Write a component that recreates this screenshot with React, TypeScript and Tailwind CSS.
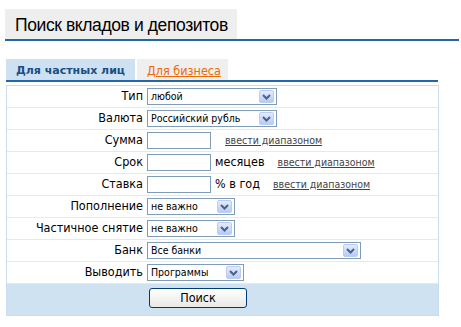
import React from "react";

const COND = '"DejaVu Sans Condensed", "DejaVu Sans", Tahoma, sans-serif';

const Chevron = () => (
  <div className="absolute right-[2px] top-[1px] w-[15px] h-[13px] rounded-[2px] border border-[#bccbf0] bg-gradient-to-b from-[#e2ebfe] to-[#b7cbf5] flex items-center justify-center">
    <svg width="9" height="6" viewBox="0 0 9 6">
      <path d="M1 1 L4.5 4.5 L8 1" fill="none" stroke="#4d6185" strokeWidth="2" />
    </svg>
  </div>
);

const Select = ({ w, text }: { w: string; text: string }) => (
  <div className={`relative h-[17px] border border-[#7f9db9] bg-white ${w}`}>
    <span className="absolute left-[3px] top-0 leading-[15px] text-[10.5px] text-black whitespace-nowrap" style={{ fontFamily: COND }}>
      {text}
    </span>
    <Chevron />
  </div>
);

const Input = () => <div className="h-[17px] w-[64px] border border-[#7f9db9] bg-white" />;

const Link = ({ className = "" }: { className?: string }) => (
  <span className={`text-[10.5px] text-[#444444] underline whitespace-nowrap ${className}`} style={{ fontFamily: COND }}>
    ввести диапазоном
  </span>
);

const Row = ({ label, children }: { label: string; children: React.ReactNode }) => (
  <div className="flex items-center h-[22px] border-b border-[#e9e9e9]">
    <div className="w-[140px] pr-[4px] text-right text-[12.5px] text-black whitespace-nowrap" style={{ fontFamily: COND }}>
      {label}
    </div>
    <div className="flex items-center">{children}</div>
  </div>
);

export default function App() {
  return (
    <div
      className="w-[461px] h-[327px] bg-white overflow-hidden"
      style={{ fontFamily: '"DejaVu Sans", Tahoma, sans-serif' }}
    >
      <div className="pt-[9px] pl-[5px]">
        <div
          className="w-[232px] h-[30px] bg-[#eeeeee] pl-[10px] text-[17.5px] leading-[32px] text-black whitespace-nowrap"
          style={{ fontFamily: '"Liberation Sans", Arial, sans-serif', letterSpacing: "-0.4px" }}
        >
          Поиск вкладов и депозитов
        </div>
        <div className="w-[454px] h-[2px] bg-[#2467a8]" />
      </div>

      <div className="ml-[6px] mt-[18px] flex gap-[2px] h-[21px]">
        <div className="w-[129px] bg-[#cde1f2] pl-[10px] text-[11px] font-bold leading-[23px] text-[#1b4e82] whitespace-nowrap">
          Для частных лиц
        </div>
        <div className="w-[91px] bg-[#efefef] pl-[10px] text-[12.5px] leading-[23px] text-[#ee6a00] underline whitespace-nowrap" style={{ fontFamily: COND }}>
          Для бизнеса
        </div>
      </div>
      <div className="ml-[6px] w-[432px] h-[2px] bg-[#2467a8]" />

      <div className="ml-[6px] mt-[3px] w-[433px] border border-[#c8ddf0]">
        <Row label="Тип">
          <Select w="w-[130px]" text="любой" />
        </Row>
        <Row label="Валюта">
          <Select w="w-[130px]" text="Российский рубль" />
        </Row>
        <Row label="Сумма">
          <Input />
          <Link className="ml-[14px]" />
        </Row>
        <Row label="Срок">
          <Input />
          <span className="ml-[4px] text-[12.5px] text-black whitespace-nowrap" style={{ fontFamily: COND }}>месяцев</span>
          <Link className="ml-[13px]" />
        </Row>
        <Row label="Ставка">
          <Input />
          <span className="ml-[4px] text-[12.5px] text-black whitespace-nowrap" style={{ fontFamily: COND }}>% в год</span>
          <Link className="ml-[13px]" />
        </Row>
        <Row label="Пополнение">
          <Select w="w-[88px]" text="не важно" />
        </Row>
        <Row label="Частичное снятие">
          <Select w="w-[88px]" text="не важно" />
        </Row>
        <Row label="Банк">
          <Select w="w-[214px]" text="Все банки" />
        </Row>
        <Row label="Выводить">
          <Select w="w-[97px]" text="Программы" />
        </Row>
        <div className="h-[31px] bg-[#cee2f2] pt-[4px] pl-[142px]">
          <div
            className="w-[98px] h-[20px] rounded-[3px] border border-[#003c74] bg-gradient-to-b from-white to-[#e9e8e2] text-center text-[12.5px] leading-[18px] text-black"
            style={{ fontFamily: COND }}
          >
            Поиск
          </div>
        </div>
      </div>
    </div>
  );
}
